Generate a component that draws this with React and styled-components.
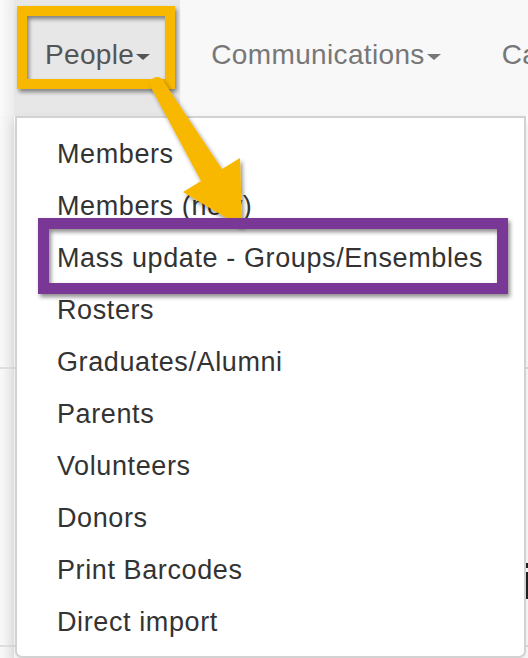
import React from "react";
import styled, { createGlobalStyle } from "styled-components";

const Global = createGlobalStyle`
  html, body { margin: 0; padding: 0; background: #fff; overflow: hidden; }
  body { font-family: "Liberation Sans", Arial, Helvetica, sans-serif; }
`;

const Page = styled.div`
  position: relative;
  width: 528px;
  height: 658px;
  overflow: hidden;
  display: flex;
  flex-direction: column;
`;

const Navbar = styled.nav`
  height: 116px;
  flex: none;
  display: flex;
  padding-left: 14px;
  background: linear-gradient(to right, #fbfbfb 0, #ececec 14px, #f8f8f8 14px);
  white-space: nowrap;
`;

const NavItem = styled.a`
  display: flex;
  align-items: center;
  padding: 0 30px 6px 31px;
  font-size: 28px;
  letter-spacing: 0.35px;
  color: ${(p) => (p.$active ? "#555" : "#777")};
  background: ${(p) => (p.$active ? "#e7e7e7" : "transparent")};
  text-decoration: none;
  flex: none;
`;

const Caret = styled.span`
  display: inline-block;
  width: 0;
  height: 0;
  margin-left: 2px;
  margin-top: 4px;
  border-top: 6px solid currentColor;
  border-left: 7px solid transparent;
  border-right: 7px solid transparent;
`;

const Section = styled.div`
  height: ${(p) => p.$h}px;
  flex: none;
  border-top: ${(p) => (p.$line ? "2px solid #dedede" : "none")};
  background: linear-gradient(to right, #f9f9f9 0, #e9e9e9 14px, #fff 14px);
  display: flex;
  justify-content: flex-end;
  align-items: flex-start;
`;

const BigText = styled.div`
  font-size: 50px;
  font-weight: bold;
  color: #222;
  margin-top: 188px;
  margin-right: -7px;
  line-height: 1;
`;

const Dropdown = styled.ul`
  position: absolute;
  left: 15px;
  top: 116px;
  width: 507px;
  margin: 0;
  padding: 10px 0 8px;
  list-style: none;
  background: #fff;
  border: 2px solid #d2d2d2;
  border-radius: 0 0 7px 7px;
  box-shadow: 0 6px 12px rgba(0, 0, 0, 0.12);
`;

const MenuItem = styled.li`
  padding: 0 40px;
  line-height: 52px;
  height: 52px;
  font-size: 27px;
  letter-spacing: 0.6px;
  color: #333;
  white-space: nowrap;
`;

const Annotations = styled.svg`
  position: absolute;
  left: 0;
  top: 0;
  width: 528px;
  height: 658px;
  pointer-events: none;
`;

const items = [
  "Members",
  "Members (new)",
  "Mass update - Groups/Ensembles",
  "Rosters",
  "Graduates/Alumni",
  "Parents",
  "Volunteers",
  "Donors",
  "Print Barcodes",
  "Direct import",
];

export default function App() {
  return (
    <>
      <Global />
      <Page>
        <Navbar>
          <NavItem $active>
            People<Caret />
          </NavItem>
          <NavItem>
            Communications<Caret />
          </NavItem>
          <NavItem>Calendar</NavItem>
        </Navbar>
        <Section $h={251} />
        <Section $h={276} $line>
          <BigText>i</BigText>
        </Section>
        <Section $h={40} $line />
        <Dropdown>
          {items.map((t) => (
            <MenuItem key={t}>{t}</MenuItem>
          ))}
        </Dropdown>
        <Annotations viewBox="0 0 528 658">
          <defs>
            <filter id="sh" x="-20%" y="-20%" width="140%" height="140%">
              <feDropShadow dx="2" dy="3" stdDeviation="2" floodColor="#000" floodOpacity="0.45" />
            </filter>
          </defs>
          <rect x="22" y="11" width="148" height="73" fill="none" stroke="#F8B800" strokeWidth="10" filter="url(#sh)" />
          <g filter="url(#sh)" fill="#F8B800">
            <circle cx="157" cy="84" r="7" />
            <polygon points="151,87.5 163,80.5 222,169 240,158 242,227 183,192 201,181" />
          </g>
          <rect x="43.5" y="223.5" width="459" height="65" fill="none" stroke="#7A3896" strokeWidth="11" filter="url(#sh)" />
        </Annotations>
      </Page>
    </>
  );
}
